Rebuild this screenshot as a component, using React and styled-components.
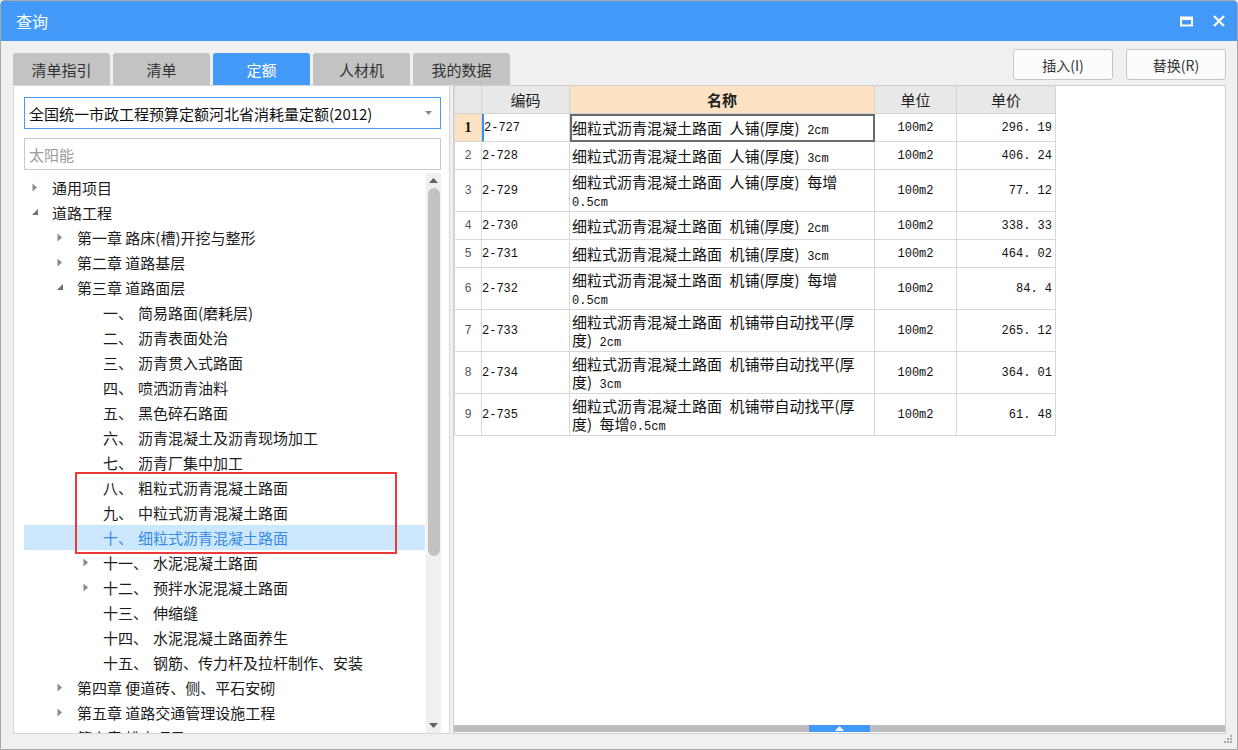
import React from 'react';
import styled, { createGlobalStyle } from 'styled-components';

const GlobalStyle = createGlobalStyle`
  html, body { margin: 0; padding: 0; background: #fff; }
  body { font-family: "Noto Sans CJK SC", "Noto Sans", sans-serif; }
  * { box-sizing: border-box; }
`;

const tabs = ['清单指引', '清单', '定额', '人材机', '我的数据'];

const tree = [
  { level: 0, arrow: 'closed', text: '通用项目' },
  { level: 0, arrow: 'open', text: '道路工程' },
  { level: 1, arrow: 'closed', text: '第一章 路床(槽)开挖与整形' },
  { level: 1, arrow: 'closed', text: '第二章 道路基层' },
  { level: 1, arrow: 'open', text: '第三章 道路面层' },
  { level: 2, num: '一、', text: '简易路面(磨耗层)' },
  { level: 2, num: '二、', text: '沥青表面处治' },
  { level: 2, num: '三、', text: '沥青贯入式路面' },
  { level: 2, num: '四、', text: '喷洒沥青油料' },
  { level: 2, num: '五、', text: '黑色碎石路面' },
  { level: 2, num: '六、', text: '沥青混凝土及沥青现场加工' },
  { level: 2, num: '七、', text: '沥青厂集中加工' },
  { level: 2, num: '八、', text: '粗粒式沥青混凝土路面' },
  { level: 2, num: '九、', text: '中粒式沥青混凝土路面' },
  { level: 2, num: '十、', text: '细粒式沥青混凝土路面', selected: true },
  { level: 2, arrow: 'closed', num: '十一、', text: '水泥混凝土路面' },
  { level: 2, arrow: 'closed', num: '十二、', text: '预拌水泥混凝土路面' },
  { level: 2, num: '十三、', text: '伸缩缝' },
  { level: 2, num: '十四、', text: '水泥混凝土路面养生' },
  { level: 2, num: '十五、', text: '钢筋、传力杆及拉杆制作、安装' },
  { level: 1, arrow: 'closed', text: '第四章 便道砖、侧、平石安砌' },
  { level: 1, arrow: 'closed', text: '第五章 道路交通管理设施工程' },
  { level: 1, arrow: 'closed', text: '第六章 排水项目' },
];

// en space (\u2002) stands in for the wide space of the original font
const rows = [
  { code: '2-727', name: [['细粒式沥青混凝土路面\u2002人铺(厚度)\u2002', '2cm']], price: '296.19' },
  { code: '2-728', name: [['细粒式沥青混凝土路面\u2002人铺(厚度)\u2002', '3cm']], price: '406.24' },
  { code: '2-729', name: [['细粒式沥青混凝土路面\u2002人铺(厚度)\u2002每增', ''], ['', '0.5cm']], price: '77.12' },
  { code: '2-730', name: [['细粒式沥青混凝土路面\u2002机铺(厚度)\u2002', '2cm']], price: '338.33' },
  { code: '2-731', name: [['细粒式沥青混凝土路面\u2002机铺(厚度)\u2002', '3cm']], price: '464.02' },
  { code: '2-732', name: [['细粒式沥青混凝土路面\u2002机铺(厚度)\u2002每增', ''], ['', '0.5cm']], price: '84.4' },
  { code: '2-733', name: [['细粒式沥青混凝土路面\u2002机铺带自动找平(厚', ''], ['度)\u2002', '2cm']], price: '265.12' },
  { code: '2-734', name: [['细粒式沥青混凝土路面\u2002机铺带自动找平(厚', ''], ['度)\u2002', '3cm']], price: '364.01' },
  { code: '2-735', name: [['细粒式沥青混凝土路面\u2002机铺带自动找平(厚', ''], ['度)\u2002每增', '0.5cm']], price: '61.48' },
];

const Window = styled.div`
  width: 1238px;
  height: 750px;
  display: flex;
  flex-direction: column;
  background: #f0f0f0;
  border: 1px solid #a8a8a8;
  border-radius: 4px 4px 0 0;
  overflow: hidden;
`;

const TitleBar = styled.div`
  height: 40px;
  flex: none;
  background: #4399f8;
  display: flex;
  align-items: center;
  padding: 0 12px 0 15px;
  color: #fff;
  font-size: 16px;
`;

const Title = styled.div`
  flex: 1;
`;

const TitleIcons = styled.div`
  display: flex;
  align-items: center;
  gap: 20px;
`;

const Toolbar = styled.div`
  height: 44px;
  flex: none;
  display: flex;
  align-items: flex-end;
  padding: 0 11px 0 12px;
`;

const Tabs = styled.div`
  display: flex;
  gap: 3px;
  flex: 1;
`;

const Tab = styled.div`
  width: 97px;
  height: 32px;
  border-radius: 3px 3px 0 0;
  background: ${p => (p.$active ? '#4399f8' : '#c3c3c3')};
  color: ${p => (p.$active ? '#fff' : '#333')};
  font-size: 15px;
  display: flex;
  align-items: center;
  justify-content: center;
`;

const Buttons = styled.div`
  display: flex;
  gap: 13px;
  align-self: flex-start;
  margin-top: 8px;
`;

const Button = styled.div`
  width: 100px;
  height: 31px;
  border: 1px solid #c6c6c6;
  border-radius: 3px;
  background: #fcfcfc;
  color: #333;
  font-size: 14px;
  display: flex;
  align-items: center;
  justify-content: center;
`;

const Main = styled.div`
  flex: 1;
  min-height: 0;
  display: flex;
  gap: 3px;
  padding: 0 11px 0 12px;
`;

const LeftPanel = styled.div`
  width: 437px;
  background: #fff;
  border: 1px solid #d6d6d6;
  display: flex;
  flex-direction: column;
  padding: 11px 8px 0 10px;
`;

const Select = styled.div`
  height: 32px;
  flex: none;
  border: 1px solid #4a9cf2;
  display: flex;
  align-items: center;
  padding: 0 8px 0 4px;
  font-size: 15px;
  color: #111;
`;

const SelectText = styled.div`
  flex: 1;
  white-space: nowrap;
`;

const Search = styled.div`
  height: 32px;
  flex: none;
  margin-top: 9px;
  border: 1px solid #c8c8c8;
  display: flex;
  align-items: center;
  padding: 0 4px;
  font-size: 15px;
  color: #9a9a9a;
`;

const TreeArea = styled.div`
  flex: 1;
  min-height: 0;
  display: flex;
  margin-top: 3px;
`;

const TreeList = styled.div`
  position: relative;
  flex: 1;
  overflow: hidden;
  padding-top: 2px;
`;

const TreeRow = styled.div`
  height: 25px;
  display: flex;
  align-items: center;
  padding-left: ${p => p.$level * 25 + (p.$level === 2 ? 1 : 0)}px;
  font-size: 15px;
  white-space: nowrap;
  color: ${p => (p.$selected ? '#3a8ae4' : '#1b1b1b')};
  background: ${p => (p.$selected ? '#cce8ff' : 'transparent')};
`;

const ArrowSlot = styled.div`
  width: 28px;
  flex: none;
  display: flex;
  align-items: center;
  padding-left: 8px;
`;

const Num = styled.span`
  margin-right: 5px;
`;

const Annotation = styled.div`
  position: absolute;
  left: 51px;
  top: 299px;
  width: 322px;
  height: 82px;
  border: 2px solid #ec3a3a;
  pointer-events: none;
`;

const VScroll = styled.div`
  width: 15px;
  flex: none;
  background: #f0f0f0;
  display: flex;
  flex-direction: column;
  align-items: center;
  margin-left: 1px;
`;

const ScrollArrow = styled.div`
  height: 15px;
  flex: none;
  display: flex;
  align-items: center;
  justify-content: center;
`;

const Thumb = styled.div`
  width: 12px;
  height: 368px;
  border-radius: 6px;
  background: #c2c2c2;
`;

const Spacer = styled.div`
  flex: 1;
`;

const RightPanel = styled.div`
  flex: 1;
  background: #fff;
  border: 1px solid #cfcfcf;
  display: flex;
  flex-direction: column;
`;

const TableWrap = styled.div`
  flex: 1;
  min-height: 0;
`;

const Grid = styled.div`
  display: grid;
  grid-template-columns: 27px 88px 305px 82px 99px;
  width: 601px;
  border-left: 1px solid #d8d8d8;
`;

const HeadCell = styled.div`
  height: 28px;
  background: ${p => (p.$hot ? '#fde3c3' : '#e8e8e8')};
  border-right: 1px solid #d4d4d4;
  border-bottom: 1px solid #d4d4d4;
  display: flex;
  align-items: center;
  justify-content: center;
  font-size: 15px;
  font-weight: ${p => (p.$hot ? 700 : 400)};
  color: #222;
`;

const Cell = styled.div`
  height: ${p => (p.$tall ? 42 : 28)}px;
  border-right: 1px solid #d8d8d8;
  border-bottom: 1px solid #d8d8d8;
  display: flex;
  align-items: center;
  justify-content: ${p => p.$align || 'flex-start'};
  padding: 0 3px;
  color: #111;
  background: ${p => p.$bg || '#fff'};
  font-family: "Liberation Mono", "Noto Sans CJK SC", monospace;
  font-size: 12px;
`;

const RowNum = styled(Cell)`
  justify-content: center;
  color: ${p => (p.$current ? '#111' : '#555')};
  font-family: ${p => (p.$current ? '"Liberation Serif", serif' : '"Liberation Mono", monospace')};
  font-weight: ${p => (p.$current ? 700 : 400)};
  font-size: ${p => (p.$current ? 14 : 12)}px;
`;

const CodeCell = styled(Cell)`
  border-left: ${p => (p.$current ? '2px solid #3a8ee6' : 'none')};
  padding-left: 0;
`;

const NameCell = styled(Cell)`
  flex-direction: column;
  align-items: flex-start;
  justify-content: center;
  font-family: "Noto Sans CJK SC", sans-serif;
  font-size: 15px;
  line-height: 18px;
  padding-left: 2px;
  outline: ${p => (p.$focus ? '2px solid #6b6b6b' : 'none')};
  outline-offset: -2px;
`;

const NameLine = styled.div`
  white-space: nowrap;
  height: 18px;
`;

const Mono = styled.span`
  font-family: "Liberation Mono", monospace;
  font-size: 12px;
`;

const HScroll = styled.div`
  height: 7px;
  flex: none;
  background: #bdbdbd;
  display: flex;
  margin-bottom: 1px;
`;

const HandleGap = styled.div`
  width: 355px;
`;

const Handle = styled.div`
  width: 61px;
  background: #4399f8;
  display: flex;
  align-items: center;
  justify-content: center;
`;

const Footer = styled.div`
  height: 15px;
  flex: none;
  display: flex;
  justify-content: flex-end;
  align-items: flex-start;
  padding: 0 4px 0 0;
`;

const Arrow = ({ type }) =>
  type === 'open' ? (
    <svg width="7" height="7" viewBox="0 0 7 7">
      <polygon points="6,0 6,6 0,6" fill="#6e6e6e" />
    </svg>
  ) : (
    <svg width="6" height="9" viewBox="0 0 6 9">
      <polygon points="0.5,0.5 5,4.5 0.5,8.5" fill="#8a8a8a" />
    </svg>
  );

const Grip = () => (
  <svg width="12" height="12" viewBox="0 0 12 12">
    {[[9, 1], [6, 4], [9, 4], [3, 7], [6, 7], [9, 7]].map(([x, y]) => (
      <rect key={`${x}-${y}`} x={x} y={y} width="2" height="2" fill="#a8a8a8" />
    ))}
  </svg>
);

export default function App() {
  return (
    <>
      <GlobalStyle />
      <Window>
        <TitleBar>
          <Title>查询</Title>
          <TitleIcons>
            <svg width="13" height="11" viewBox="0 0 13 11">
              <rect x="1" y="1.5" width="11" height="8" fill="none" stroke="#fff" strokeWidth="2" />
              <rect x="1" y="1" width="11" height="3" fill="#fff" />
            </svg>
            <svg width="12" height="12" viewBox="0 0 12 12">
              <path d="M1 1 L11 11 M11 1 L1 11" stroke="#fff" strokeWidth="2.2" />
            </svg>
          </TitleIcons>
        </TitleBar>

        <Toolbar>
          <Tabs>
            {tabs.map(t => (
              <Tab key={t} $active={t === '定额'}>{t}</Tab>
            ))}
          </Tabs>
          <Buttons>
            <Button>插入(I)</Button>
            <Button>替换(R)</Button>
          </Buttons>
        </Toolbar>

        <Main>
          <LeftPanel>
            <Select>
              <SelectText>全国统一市政工程预算定额河北省消耗量定额(2012)</SelectText>
              <svg width="7" height="4" viewBox="0 0 7 4">
                <polygon points="0,0 7,0 3.5,4" fill="#8a8a8a" />
              </svg>
            </Select>
            <Search>太阳能</Search>
            <TreeArea>
              <TreeList>
                {tree.map((n, i) => (
                  <TreeRow key={i} $level={n.level} $selected={n.selected}>
                    <ArrowSlot>{n.arrow && <Arrow type={n.arrow} />}</ArrowSlot>
                    {n.num && <Num>{n.num}</Num>}
                    {n.text}
                  </TreeRow>
                ))}
                <Annotation />
              </TreeList>
              <VScroll>
                <ScrollArrow>
                  <svg width="9" height="5" viewBox="0 0 9 5">
                    <polygon points="0,5 9,5 4.5,0" fill="#606060" />
                  </svg>
                </ScrollArrow>
                <Thumb />
                <Spacer />
                <ScrollArrow>
                  <svg width="9" height="5" viewBox="0 0 9 5">
                    <polygon points="0,0 9,0 4.5,5" fill="#606060" />
                  </svg>
                </ScrollArrow>
              </VScroll>
            </TreeArea>
          </LeftPanel>

          <RightPanel>
            <TableWrap>
              <Grid>
                <HeadCell />
                <HeadCell>编码</HeadCell>
                <HeadCell $hot>名称</HeadCell>
                <HeadCell>单位</HeadCell>
                <HeadCell>单价</HeadCell>
                {rows.map((r, i) => {
                  const tall = r.name.length > 1;
                  const current = i === 0;
                  return (
                    <React.Fragment key={r.code}>
                      <RowNum $tall={tall} $current={current} $bg={current ? '#fde3c3' : undefined}>
                        {i + 1}
                      </RowNum>
                      <CodeCell $tall={tall} $current={current}>{r.code}</CodeCell>
                      <NameCell $tall={tall} $focus={current}>
                        {r.name.map(([zh, latin], j) => (
                          <NameLine key={j}>
                            {zh}
                            {latin && <Mono>{latin}</Mono>}
                          </NameLine>
                        ))}
                      </NameCell>
                      <Cell $tall={tall} $align="center">100m2</Cell>
                      <Cell $tall={tall} $align="flex-end">{r.price.replace('.', '. ')}</Cell>
                    </React.Fragment>
                  );
                })}
              </Grid>
            </TableWrap>
            <HScroll>
              <HandleGap />
              <Handle>
                <svg width="9" height="5" viewBox="0 0 9 5">
                  <polygon points="0,5 9,5 4.5,0" fill="#fff" />
                </svg>
              </Handle>
            </HScroll>
          </RightPanel>
        </Main>

        <Footer>
          <Grip />
        </Footer>
      </Window>
    </>
  );
}
